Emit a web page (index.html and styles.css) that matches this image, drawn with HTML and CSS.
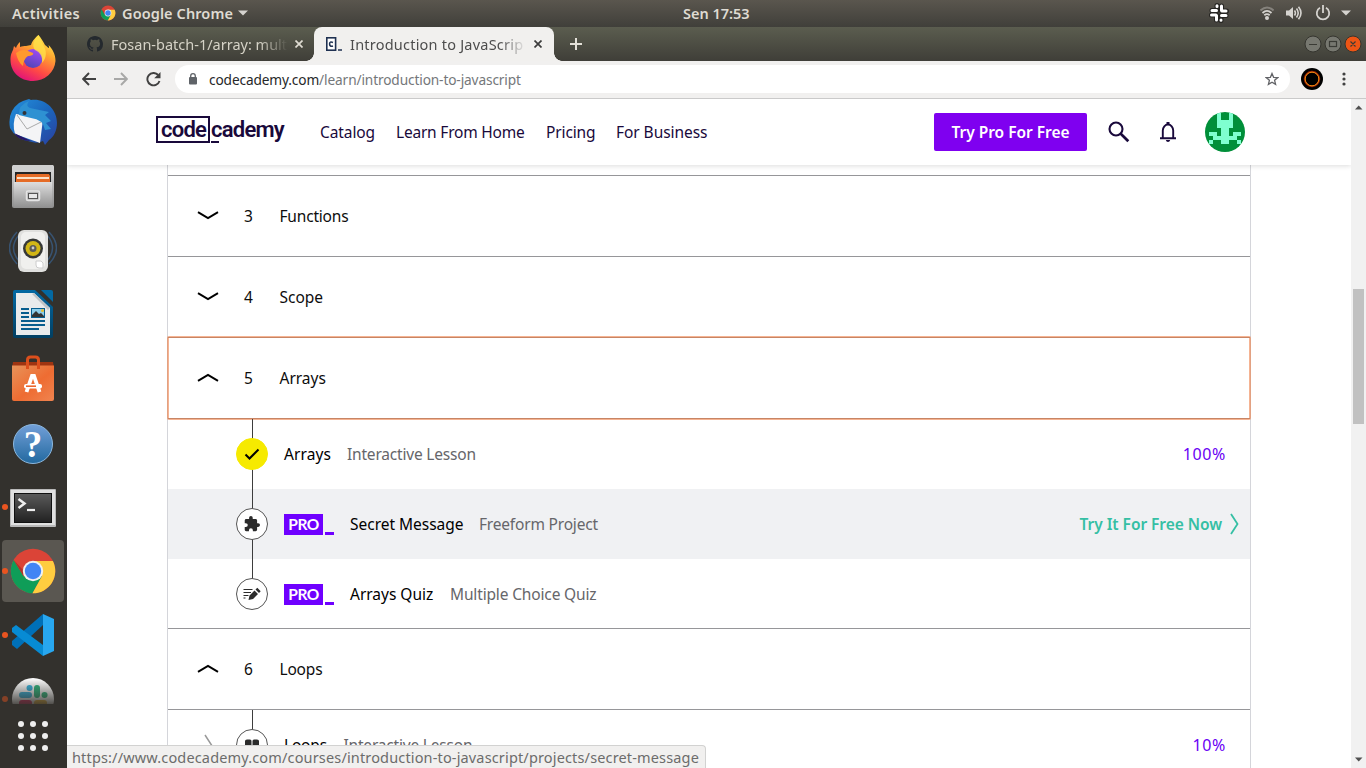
FILE: index.html
```html
<!DOCTYPE html>
<html lang="en">
<head>
<meta charset="utf-8">
<title>Introduction to JavaScript</title>
<link rel="stylesheet" href="styles.css">
</head>
<body>
<svg class="defs" width="0" height="0">
  <defs>
    <linearGradient id="ffBody" x1=".8" y1="0" x2=".3" y2="1"><stop offset="0" stop-color="#fff44f"/><stop offset=".35" stop-color="#ffa630"/><stop offset=".7" stop-color="#ff4a45"/><stop offset="1" stop-color="#e0117b"/></linearGradient>
    <linearGradient id="ffCore" x1=".7" y1="0" x2=".3" y2="1"><stop offset="0" stop-color="#a149f5"/><stop offset="1" stop-color="#5146b5"/></linearGradient>
    <linearGradient id="tb" x1="0" y1="0" x2="1" y2="1"><stop offset="0" stop-color="#2591dd"/><stop offset=".5" stop-color="#1b67bd"/><stop offset="1" stop-color="#2a3f9e"/></linearGradient>
    <linearGradient id="steel" x1="0" y1="0" x2="0" y2="1"><stop offset="0" stop-color="#dedede"/><stop offset="1" stop-color="#8f8f8f"/></linearGradient>
    <linearGradient id="bag" x1="0" y1="0" x2="1" y2="1"><stop offset="0" stop-color="#e8935a"/><stop offset=".55" stop-color="#ee6c32"/><stop offset="1" stop-color="#f08450"/></linearGradient>
    <linearGradient id="blueBall" x1="0" y1="0" x2="0" y2="1"><stop offset="0" stop-color="#729fd8"/><stop offset="1" stop-color="#22699f"/></linearGradient>
    <linearGradient id="screen" x1="0" y1="0" x2="0" y2="1"><stop offset="0" stop-color="#5a5a5a"/><stop offset="1" stop-color="#222"/></linearGradient>
    <linearGradient id="writer" x1="0" y1="0" x2="0" y2="1"><stop offset="0" stop-color="#0369a3"/><stop offset="1" stop-color="#023f62"/></linearGradient>
    <linearGradient id="fade" x1="0" y1="0" x2="0" y2="1"><stop offset="0" stop-color="#33312d" stop-opacity="0"/><stop offset="1" stop-color="#33312d" stop-opacity=".85"/></linearGradient>
    <symbol id="chrome" viewBox="0 0 48 48">
      <circle cx="24" cy="24" r="22.3" fill="#db4437"/>
      <path d="M4.7 13A22.3 22.3 0 0 0 23.5 46.300L33 29.200 24 24 14.700 29.500Z" fill="#0f9d58"/>
      <path d="M24 14H43.900A22.300 22.300 0 0 1 23.500 46.300L33 29Z" fill="#ffcd40"/>
      <path d="M4.700 13 14.500 29 14 23Z" fill="#b0332a"/>
      <circle cx="24" cy="24" r="10.200" fill="#f1f1f1"/><circle cx="24" cy="24" r="8.200" fill="#4285f4"/>
    </symbol>
    <symbol id="chev" viewBox="0 0 22 9"><path d="M1 1.200 11 7 21 1.200" fill="none" stroke="#000" stroke-width="2"/></symbol>
  </defs>
</svg>

<header class="topbar">
  <span class="activities">Activities</span>
  <svg class="tb-chrome" width="16" height="16"><use href="#chrome"/></svg>
  <span class="appname">Google Chrome</span>
  <svg width="10" height="6" viewBox="0 0 10 6"><path d="M0 .5h10L5 5.500z" fill="#d5d3cf"/></svg>
  <span class="clock">Sen 17:53</span>
  <div class="tray">
    <svg class="tray-slack" width="20" height="20" viewBox="0 0 20 20"><g stroke="#262522" stroke-width="5" stroke-linecap="round"><path d="M8 2.500V7.500M12.500 3V7.500M7.500 12.500V17M12 12.500V17.500M2.500 12H7.500M3 7.500H7.500M12.500 12.500H17M12.500 8H17.500"/></g><g stroke="#fff" stroke-width="3" stroke-linecap="round"><path d="M12.500 3V7.500M7.500 12.500V17M3 7.500H7.500M12.500 12.500H17M2.500 12H7M8 2.700V3.500M13 8H17M12 17V17.300"/></g></svg>
    <svg class="tray-wifi" width="14" height="14" viewBox="0 0 14 14" fill="none"><path d="M.5 4.500Q7-1.500 13.500 4.500" stroke="#85827c" stroke-width="2"/><path d="M2.500 7Q7 2.800 11.500 7M4.300 9.300Q7 7 9.700 9.300" stroke="#d5d3cf" stroke-width="1.800"/><circle cx="7" cy="12" r="2" fill="#d5d3cf"/></svg>
    <svg class="tray-vol" width="16" height="14" viewBox="0 0 16 14" fill="none" stroke="#d5d3cf" stroke-width="1.600"><path d="M0 4.500h3L7 1v12L3 9.500H0z" fill="#d5d3cf" stroke="none"/><path d="M8.500 4.500q1.800 2.500 0 5M10.500 2.500q3.400 4.500 0 9M12.500.7q5 6.300 0 12.600"/></svg>
    <svg class="tray-power" width="16" height="16" viewBox="0 0 16 16" fill="none" stroke="#d5d3cf" stroke-width="1.800"><path d="M5 2.800A6.200 6.200 0 1 0 11 2.800M8 0V8"/></svg>
    <svg width="10" height="6" viewBox="0 0 10 6"><path d="M0 .5h10L5 5.500z" fill="#d5d3cf"/></svg>
  </div>
</header>

<div class="desktop">
  <nav class="dock">
    <div class="app"><svg width="48" height="48" viewBox="0 0 48 48"><path d="M29.500 1C32 4 34 7 36 11c2 1 3 3 4 3 0-1 0-2-.5-3 4 4 7 9 7 16A22.500 21.500 0 0 1 24 47C11 47 1.500 38 1.500 26c0-5 1-7 2.500-10L5 12l2 2c1-3 2-4 4-6v5c2-1 4-1 6-1l5-1C23 7 27 3 29.500 1Z" fill="url(#ffBody)"/><circle cx="24" cy="24.500" r="9.500" fill="url(#ffCore)"/><path d="M7 19q6-5 12-2l5 2c1 2-2 3-5 3-3 2-5 6-5 10-4-3-6-8-7-13Z" fill="#ff9a2e"/><path d="M29.500 1C24 7 23 12 26 16c5 2 8 7 7 13 5-5 5-13 1-18Z" fill="#ffe04a" opacity=".8"/></svg></div>
    <div class="app"><svg width="48" height="48" viewBox="0 0 48 48"><path d="M14 3 20 1l2 1C36 0 48 11 48 25c0 7-3 14-8 17l-4 5-2-4Q28 46 23 44 7 42 1 30-2 14 10 5Z" fill="url(#tb)"/><path d="M7 16 34 21 31 45 6 36Q3 26 7 16Z" fill="#f4f4f6"/><path d="M8 17 18 31 34 23" fill="none" stroke="#aaa" stroke-width="1"/><path d="M10 17Q9 7 20 3 16 8 21 10L40 14 36 17 42 23 37 25 42 31 36 32Q34 21 22 20Z" fill="#2e91d2"/><circle cx="15.500" cy="15" r="2" fill="#343438"/><path d="M5 35 22 43Q10 43 5 35Z" fill="#281463"/></svg></div>
    <div class="app"><svg width="48" height="48" viewBox="0 0 48 48"><rect x="3" y="3" width="42" height="43" rx="2" fill="url(#steel)"/><path d="M4 3h40l1 5H3z" fill="#cfcfcf"/><path d="M6 10h36v11H6z" fill="#252525"/><path d="M7 14l1-2h32l1 2v7H7z" fill="#e56c27"/><path d="M8 15h32v2H8z" fill="#fbe1c8"/><path d="M5 20h38v26H5z" fill="url(#steel)"/><rect x="17.500" y="29" width="13" height="9.500" rx="1.500" fill="#bbb" stroke="#e4e4e4" stroke-width="1.500"/><rect x="19.500" y="31.500" width="9" height="5" fill="#e7e7e7" stroke="#555"/></svg></div>
    <div class="app"><svg width="48" height="48" viewBox="0 0 48 48"><g fill="none" stroke="#385371" stroke-width="1.500"><path d="M8 6Q-7 22 8 38M10 9Q-1 22 10 35M40 6Q55 22 40 38M38 9Q49 22 38 35"/></g><rect x="9" y="4" width="30" height="42" rx="6" fill="#e0e0de"/><rect x="12" y="6" width="24" height="37" rx="5" fill="#f0f0ee"/><circle cx="24" cy="22.500" r="10" fill="#363837"/><circle cx="24" cy="22.500" r="7.500" fill="#d1b616"/><circle cx="24" cy="22.500" r="3.500" fill="#5b5b55"/><circle cx="24" cy="22" r="1.400" fill="#ccc"/><path d="M27 35h5l2 2v5h-4q-3 0-3-3z" fill="#fff" stroke="#ccc"/></svg></div>
    <div class="app"><svg width="48" height="48" viewBox="0 0 48 48"><path d="M6 0h20l18 17v29a2 2 0 0 1-2 2H6a2 2 0 0 1-2-2V2a2 2 0 0 1 2-2z" fill="url(#writer)"/><path d="M32 0h10a2 2 0 0 1 2 2v10z" fill="#0369a3"/><path d="M7 3h18l16 15v27H7z" fill="#e9ebec"/><path d="M25 3l16 15-2 2L23 4z" fill="#bfc3c6"/><path d="M12 18h8v2h-8zm0 4h8v2h-8zm0 4h8v2h-8zm0 4h24v2H12zm0 4h24v2H12zm0 4h18v2H12z" fill="#075d8e"/><path d="M22 18h14v10H22z" fill="#075d8e"/><path d="M23 19h12v8H23z" fill="#8dcde9"/><path d="M23 27v-2l4-4 3 3 2-1 3 3v1z" fill="#333"/><circle cx="33.500" cy="20.500" r="1.500" fill="#e5be33"/></svg></div>
    <div class="app"><svg width="48" height="48" viewBox="0 0 48 48"><path d="M4 7h40l1 6H3z" fill="#9f3411"/><path d="M3 10.500h42V44a2 2 0 0 1-2 2H5a2 2 0 0 1-2-2z" fill="url(#bag)"/><path d="M18.500 14V5q0-3 3-3h5q3 0 3 3v9" fill="none" stroke="#dc4f1c" stroke-width="3"/><path d="M17.500 37 23 21h2L30.500 37" fill="none" stroke="#fff" stroke-width="3.800"/><rect x="15" y="29" width="18" height="4.500" rx="2" fill="#fff"/><path d="M17 31.200h10" stroke="#ed672d" stroke-width="1.600"/></svg></div>
    <div class="app"><svg width="48" height="48" viewBox="0 0 48 48"><circle cx="24" cy="25" r="19.500" fill="url(#blueBall)" stroke="#8db8de"/><text x="24" y="38" class="q">?</text></svg></div>
    <div class="app run"><svg width="48" height="48" viewBox="0 0 48 48"><rect x="1" y="6" width="46" height="38" rx="1" fill="#b9b9b9"/><rect x="2" y="7" width="44" height="35" fill="#e0e0e0"/><rect x="5" y="10" width="38" height="30" fill="#111"/><rect x="6" y="11" width="36" height="28" fill="url(#screen)"/><path d="M9.500 16l6 4.500-6 4.500" fill="none" stroke="#eee" stroke-width="2.500"/><path d="M18 27h8" stroke="#eee" stroke-width="2.200"/></svg></div>
    <div class="app run active"><svg width="48" height="48"><use href="#chrome"/></svg></div>
    <div class="app run"><svg width="48" height="48" viewBox="0 0 48 48"><path d="M3 30 34 3v11L8 38 3 34Z" fill="#0070b8"/><path d="M3 17 7 14 34 34V45L3 21Z" fill="#078bd4"/><path d="M34 3 45 8V40L34 45Z" fill="#28a7f0"/></svg></div>
    <div class="app cut run dim"><svg width="48" height="30" viewBox="0 0 48 30"><circle cx="24" cy="25" r="21" fill="#fff"/><g stroke-width="6" stroke-linecap="round" fill="none"><path d="M13 21h7M20.500 14h.1" stroke="#36b5e0"/><path d="M28 14V21M35.500 21h.1" stroke="#2eb67d"/><path d="M13 29h7" stroke="#e01e5a"/><path d="M28 29h7" stroke="#ecb22e"/></g><path d="M0 4h48v26H0z" fill="url(#fade)"/></svg></div>
    <div class="grid9"><i></i><i></i><i></i><i></i><i></i><i></i><i></i><i></i><i></i></div>
  </nav>

  <main class="browser">
    <div class="tabs">
      <div class="tab idle">
        <svg width="16" height="16" viewBox="0 0 16 16"><path fill="#24292e" d="M8 0C3.580 0 0 3.580 0 8c0 3.540 2.290 6.530 5.470 7.590.4.070.55-.17.55-.38 0-.19-.01-.82-.01-1.490-2.010.37-2.530-.49-2.690-.94-.09-.23-.48-.94-.82-1.130-.28-.15-.68-.52-.01-.53.63-.01 1.080.58 1.230.82.72 1.210 1.870.87 2.330.66.07-.52.28-.87.51-1.070-1.780-.2-3.640-.89-3.640-3.950 0-.87.31-1.590.82-2.150-.08-.2-.36-1.020.08-2.120 0 0 .67-.21 2.200.82a7.600 7.600 0 0 1 4 0c1.530-1.040 2.200-.82 2.200-.82.44 1.100.16 1.920.08 2.120.51.56.82 1.270.82 2.150 0 3.070-1.870 3.750-3.650 3.950.29.25.54.73.54 1.480 0 1.070-.01 1.930-.01 2.200 0 .21.15.46.55.38A8.010 8.010 0 0 0 16 8c0-4.420-3.580-8-8-8z"/></svg>
        <span class="tab-title">Fosan-batch-1/array: mult</span>
        <svg class="x" width="8" height="8" viewBox="0 0 8 8"><path d="M.5.5l7 7M7.500.5l-7 7" stroke="#dfdbd2" stroke-width="1.700"/></svg>
      </div>
      <div class="tab current">
        <svg width="16" height="16" viewBox="0 0 16 16"><rect x=".8" y="1.800" width="8.800" height="12.400" fill="#fff" stroke="#1f3151" stroke-width="1.600"/><path d="M7 6.500Q3.500 5 3.600 8T7 10M12 14h4" fill="none" stroke="#1f3151" stroke-width="1.600"/></svg>
        <span class="tab-title">Introduction to JavaScrip</span>
        <svg class="x" width="8" height="8" viewBox="0 0 8 8"><path d="M.5.5l7 7M7.500.5l-7 7" stroke="#3c3c3c" stroke-width="1.700"/></svg>
      </div>
      <svg class="plus" width="12" height="12" viewBox="0 0 12 12"><path d="M6 0v12M0 6h12" stroke="#e3e0d8" stroke-width="2"/></svg>
      <div class="winbtns">
        <svg width="56" height="18" viewBox="0 0 56 18"><g stroke="#35352f"><circle cx="8" cy="9" r="8" fill="#777870"/><circle cx="28" cy="9" r="8" fill="#777870"/><circle cx="48" cy="9" r="8" fill="#ed5515"/></g><g stroke="#3a3b35" fill="none" stroke-width="1.200"><path d="M4 9.500h8M45.500 6.500l5 5M50.500 6.500l-5 5"/><rect x="24.500" y="6.500" width="7" height="5"/></g></svg>
      </div>
    </div>

    <div class="toolbar">
      <svg class="back" width="14" height="14" viewBox="0 0 14 14"><path d="M14 7H1.500M7 1 1.200 7 7 13" fill="none" stroke="#414141" stroke-width="1.900"/></svg>
      <svg class="fwd" width="14" height="14" viewBox="0 0 14 14"><path d="M0 7h12.500M7 1l5.800 6L7 13" fill="none" stroke="#a8a8a7" stroke-width="1.900"/></svg>
      <svg class="reload" width="15" height="15" viewBox="0 0 15 15"><path d="M12.200 3A6.200 6.200 0 1 0 13.500 9" fill="none" stroke="#414141" stroke-width="1.900"/><path d="M14.500 0v6.300H8.200z" fill="#414141"/></svg>
      <div class="omnibox">
        <svg width="8" height="12" viewBox="0 0 8 12"><rect y="4" width="8" height="7.500" rx="1" fill="#5f6368"/><path d="M1.700 5V3a2.300 2.300 0 0 1 4.600 0v2" fill="none" stroke="#5f6368" stroke-width="1.300"/></svg>
        <span class="url"><b>codecademy.com</b>/learn/introduction-to-javascript</span>
        <svg class="star" width="14" height="14" viewBox="0 0 14 14"><path d="M7 1.500 8.600 5.300 12.800 5.600 9.600 8.300 10.600 12.400 7 10.200 3.400 12.400 4.400 8.300 1.200 5.600 5.400 5.300Z" fill="none" stroke="#626367" stroke-width="1.300"/></svg>
      </div>
      <svg class="profile" width="22" height="22" viewBox="0 0 22 22"><circle cx="11" cy="11" r="11"/><circle cx="11" cy="11" r="7.300" fill="none" stroke="#8c1a06" stroke-width="2"/><circle cx="11" cy="11" r="6.900" fill="none" stroke="#f39712" stroke-width="1"/></svg>
      <svg width="4" height="14" viewBox="0 0 4 14" fill="#414141"><circle cx="2" cy="2" r="1.600"/><circle cx="2" cy="7" r="1.600"/><circle cx="2" cy="12" r="1.600"/></svg>
    </div>

    <div class="viewport">
      <div class="page">
        <div class="nav">
          <div class="logo"><span class="code">code</span><span class="cademy">cademy</span></div>
          <a class="n1">Catalog</a><a class="n2">Learn From Home</a><a class="n3">Pricing</a><a class="n4">For Business</a>
          <a class="cta">Try Pro For Free</a>
          <svg class="search" width="22" height="22" viewBox="0 0 22 22" fill="none" stroke="#19093b"><circle cx="8" cy="8" r="6.500" stroke-width="2.100"/><path d="M12.500 12.500 20.300 20.300" stroke-width="2.700"/></svg>
          <svg class="bell" width="16" height="20" viewBox="0 0 16 20"><path d="M2.800 16V8.500a5.200 6 0 0 1 10.400 0V16M0 16.300h16" fill="none" stroke="#19093b" stroke-width="1.900"/><path d="M6.500 0h3v3h-3zM5.800 18h4.400q-.5 2-2.200 2t-2.200-2z" fill="#19093b"/></svg>
          <svg class="avatar" width="40" height="40" viewBox="0 0 40 40"><clipPath id="round"><circle cx="20" cy="20" r="20"/></clipPath><g clip-path="url(#round)"><path fill="#008f39" d="M0 0h40v40H0z"/><path shape-rendering="crispEdges" fill="#7fffd0" d="M12 0h4v8h8V0h4v16h-4v8h4v-4h8v4h-4v4h-8v4h-8v-4H8v-4H4v-4h8v4h4v-8h-4zM4 28h4v4H4zM32 28h4v4h-4z"/></g></svg>
        </div>

        <section class="syllabus">
          <div class="unit"><svg width="22" height="9"><use href="#chev"/></svg><span class="num">3</span><span class="tight">Functions</span></div>
          <div class="unit"><svg width="22" height="9"><use href="#chev"/></svg><span class="num">4</span><span>Scope</span></div>
          <div class="unit focus"><svg class="up" width="22" height="9"><use href="#chev"/></svg><span class="num">5</span><span>Arrays</span></div>
          <div class="lessons">
            <div class="lesson">
              <span class="dot done"><svg width="16" height="16" viewBox="0 0 16 16"><path d="M1.500 8.500 5.500 12.500 14.500 3.500" fill="none" stroke="#000" stroke-width="2"/></svg></span>
              <span class="title w-arrays">Arrays</span><span class="kind tight">Interactive Lesson</span><span class="pct">100%</span>
            </div>
            <div class="lesson hover">
              <span class="dot"><svg width="16" height="16" viewBox="1 1 22 22"><path fill="#2b2b2b" d="M20.500 11H19V7c0-1.100-.9-2-2-2h-4V3.500a2.500 2.500 0 0 0-5 0V5H4c-1.100 0-1.990.9-1.990 2v3.800H3.500a2.700 2.700 0 0 1 0 5.400H2V20c0 1.100.9 2 2 2h3.800v-1.500a2.700 2.700 0 0 1 5.400 0V22H17c1.100 0 2-.9 2-2v-4h1.500a2.500 2.500 0 0 0 0-5z"/></svg></span>
              <span class="pro"><b>PRO</b><i></i></span><span class="title w-secret">Secret Message</span><span class="kind tight">Freeform Project</span>
              <span class="try">Try It For Free Now</span><svg class="go" width="9" height="22" viewBox="0 0 9 22"><path d="M1 1 7.500 11 1 21" fill="none" stroke="#35bfa4" stroke-width="1.800"/></svg>
            </div>
            <div class="lesson">
              <span class="dot"><svg width="18" height="14" viewBox="0 0 18 14"><path d="M.5 2.500h9M.5 5.500h7.500M.5 8.500h5M.5 11h2" stroke="#2b2b2b" stroke-width="1.200"/><path d="M5.500 13 6.500 8.500 11.500 3.500 15 7 10 12Z M12.500 2.500 14.300.8 17.700 4.200 16 6Z" fill="#2b2b2b"/></svg></span>
              <span class="pro"><b>PRO</b><i></i></span><span class="title w-quiz">Arrays Quiz</span><span class="kind">Multiple Choice Quiz</span>
            </div>
          </div>
          <div class="unit last"><svg class="up" width="22" height="9"><use href="#chev"/></svg><span class="num">6</span><span class="tight">Loops</span></div>
          <div class="lessons open">
            <div class="lesson">
              <svg class="arrow" width="9" height="22" viewBox="0 0 9 22"><path d="M1 1 7.500 11 1 21" fill="none" stroke="#999" stroke-width="1.500"/></svg>
              <span class="dot"><svg width="16" height="14" viewBox="0 0 16 14"><path d="M1 3Q1 1.500 3 1.500H6Q7.500 1.500 7.500 3V12H1zM8.500 3Q8.500 1.500 10 1.500h3Q15 1.500 15 3v9H8.500z" fill="#2b2b2b"/></svg></span>
              <span class="title w-loops tight">Loops</span><span class="kind tight">Interactive Lesson</span><span class="pct">10%</span>
            </div>
          </div>
        </section>
      </div>
      <div class="scroll">
        <svg width="8" height="5" viewBox="0 0 8 5"><path d="M0 4.500h7.500L3.700.5z" fill="#505050"/></svg>
        <div class="thumb"></div>
        <svg width="8" height="5" viewBox="0 0 8 5"><path d="M0 .5h7.500L3.700 4.500z" fill="#505050"/></svg>
      </div>
      <div class="status">https://www.codecademy.com/courses/introduction-to-javascript/projects/secret-message</div>
    </div>
  </main>
</div>
</body>
</html>
```
FILE: styles.css
```css
* { box-sizing: border-box; }
body { margin: 0; width: 1366px; height: 768px; overflow: hidden; display: flex; flex-direction: column; background: #fff; font-family: "Noto Sans", "Open Sans", sans-serif; }
svg { display: block; flex: none; }
span, a { white-space: nowrap; flex: none; }
.defs { position: absolute; }

/* Desktop bar */
.topbar { height: 27px; flex: none; display: flex; align-items: center; padding: 0 15px 1px 12px; background: linear-gradient(#5a564e, #403f3a); color: #dfdbd2; font-size: 14.500px; font-weight: 600; }
.activities { width: 88px; letter-spacing: .33px; }
.tb-chrome { margin-right: 6px; }
.appname { width: 116px; letter-spacing: .1px; }
.clock { margin-left: 435px; }
.tray { margin-left: auto; display: flex; align-items: center; }
.tray-slack { margin-right: 31px; }
.tray-wifi { margin-right: 12px; }
.tray-vol { margin-right: 13px; }
.tray-power { margin-right: 10px; }

.desktop { flex: 1; min-height: 0; display: flex; }

/* Dock */
.dock { width: 67px; flex: none; background: #33312d; display: flex; flex-direction: column; }
.app { position: relative; height: 64.100px; flex: none; display: flex; align-items: center; justify-content: center; padding: 0 1px 2px 0; }
.app.active::after { content: ""; position: absolute; left: 2px; top: 0; width: 62px; height: 62px; border-radius: 4px; background: #5a5751; }
.app.active svg { position: relative; z-index: 1; }
.run::before { content: ""; position: absolute; z-index: 2; left: 2px; top: 28px; width: 6px; height: 6px; border-radius: 50%; background: #e95420; }
.dim::before { opacity: .45; }
.cut { height: 36px; align-items: flex-end; padding-bottom: 0; }
.q { font: 700 37px "Liberation Serif", serif; fill: #fff; text-anchor: middle; }
.grid9 { display: grid; grid-template-columns: repeat(3, 6px); gap: 6px; margin: 17px 0 0 18px; }
.grid9 i { height: 6px; border-radius: 50%; background: #eee; }

/* Browser frame */
.browser { flex: 1; min-width: 0; display: flex; flex-direction: column; }
.tabs { height: 34px; flex: none; display: flex; align-items: center; background: linear-gradient(#5b5d4f, #3f3e38); }
.tab { height: 34px; display: flex; align-items: center; flex: none; font-size: 14.500px; }
.tab-title { margin-left: 8px; }
.idle { width: 247px; padding-left: 20px; color: #d5d2c6; }
.idle .tab-title { width: 177px; -webkit-mask-image: linear-gradient(90deg, #000 148px, transparent 177px); mask-image: linear-gradient(90deg, #000 148px, transparent 177px); }
.idle .x { margin-left: 7px; }
.current { position: relative; width: 240px; padding-left: 12px; border-radius: 8px 8px 0 0; background: #f1f0ee; color: #4d4d4d; }
.current::before, .current::after { content: ""; position: absolute; bottom: 0; width: 8px; height: 8px; }
.current::before { left: -8px; background: radial-gradient(circle at 0 0, transparent 7.500px, #f1f0ee 8px); }
.current::after { right: -8px; background: radial-gradient(circle at 100% 0, transparent 7.500px, #f1f0ee 8px); }
.current .tab-title { width: 176px; letter-spacing: .22px; -webkit-mask-image: linear-gradient(90deg, #000 150px, transparent 176px); mask-image: linear-gradient(90deg, #000 150px, transparent 176px); }
.current .x { margin-left: 8px; }
.plus { margin-left: 16px; }
.winbtns { margin: 0 5px 0 auto; }
.winbtns svg { overflow: visible; }

.toolbar { height: 38px; flex: none; display: flex; align-items: center; padding: 0 20px 1px 15px; background: #f1f0ef; border-bottom: 1px solid #cacaca; }
.fwd { margin-left: 18px; }
.reload { margin-left: 18px; }
.omnibox { width: 1115px; height: 28px; margin-left: 14px; margin-right: 11px; flex: none; border-radius: 14px; background: #fff; display: flex; align-items: center; padding: 0 11px 0 14px; }
.url { margin-left: 12px; font-size: 13.700px; letter-spacing: -.13px; color: #74777a; }
.url b { font-weight: 400; color: #27282a; }
.star { margin-left: auto; }
.profile { margin-right: 19px; }

.viewport { position: relative; flex: 1; min-height: 0; display: flex; }
.page { flex: 1; min-width: 0; overflow: hidden; font-size: 15.500px; letter-spacing: -.02px; color: #0d0d0d; }

/* Site header */
.nav { position: relative; z-index: 1; height: 66px; display: flex; align-items: center; padding-left: 89px; background: #fff; box-shadow: 0 1px 5px rgba(0, 0, 0, .14); color: #19093b; }
.logo { display: flex; width: 164px; height: 27px; flex: none; margin-top: -5px; font: 600 22px/23px Roboto, sans-serif; letter-spacing: -.760px; }
.code { width: 54px; height: 27px; border: 2px solid #19093b; padding-left: 3px; }
.cademy { position: relative; padding: 2px 0 0 1px; }
.cademy::after { content: ""; position: absolute; left: 1px; top: 25px; width: 8px; height: 2px; background: #19093b; }
.n1 { width: 76px; letter-spacing: -.1px; }
.n2 { width: 150px; letter-spacing: -.210px; }
.n3 { width: 70px; letter-spacing: -.12px; }
.n4 { width: 318px; letter-spacing: -.06px; }
.cta { width: 153px; height: 38px; line-height: 38px; border-radius: 2px; background: #7f00f0; color: #fff; font-weight: 600; text-align: center; }
.search { margin-left: 21px; }
.bell { margin-left: 30px; }
.avatar { margin-left: 29px; }

/* Syllabus */
.syllabus { width: 1084px; margin: 0 0 0 100px; padding-top: 10px; border: solid #d4d5da; border-width: 0 1px; }
.unit { height: 81px; display: flex; align-items: center; padding: 0 0 1px 29px; border-top: 1px solid #969699; }
.unit .num { width: 35.500px; margin-left: 25px; }
.up { transform: scaleY(-1); }
.tight { letter-spacing: -.19px; }
.last { height: 82px; border-bottom: 1px solid #969699; }
.focus { position: relative; height: 82px; border-bottom: 1px solid #969699; }
.focus::after { content: ""; position: absolute; inset: -2px -1px -2px; border: 2px solid rgba(238, 119, 60, .56); border-radius: 2px; }
.lessons { margin-bottom: -1px; }
.lesson { position: relative; height: 70px; display: flex; align-items: center; padding-left: 68px; }
.lesson::before { content: ""; position: absolute; left: 84px; top: 0; width: 1px; height: 100%; background: #3d3d3d; }
.lessons:not(.open) .lesson:last-child::before { height: 50%; }
.hover { background: #f0f1f3; }
.dot { position: relative; width: 32px; height: 32px; margin-right: 16px; display: flex; align-items: center; justify-content: center; border: 1px solid #555; border-radius: 50%; background: #fff; }
.done { background: #f6ea00; border-color: #f6ea00; }
.title { color: #000; }
.w-arrays { width: 63px; letter-spacing: .09px; }
.w-secret { width: 129px; }
.w-quiz { width: 100px; }
.w-loops { width: 59.500px; }
.kind { color: #66666a; }
.kind:not(.tight) { letter-spacing: -.15px; }
.pct { margin-left: auto; margin-right: 24px; color: #6a00f4; font-size: 16px; letter-spacing: .6px; }
.pro { width: 66px; display: flex; align-items: flex-end; }
.pro b { width: 39px; height: 21px; line-height: 21px; text-align: center; background: #6f00ff; color: #fff; font: 700 15.500px/21px Lato, sans-serif; letter-spacing: -.5px; }
.pro i { width: 9px; height: 3px; margin-left: 2px; background: #6f00ff; }
.try { margin-left: auto; color: #35bfa4; font-weight: 600; letter-spacing: -.05px; }
.go { margin: 0 11px 0 8px; }
.arrow { position: absolute; left: 36px; top: 24px; }

.scroll { width: 15px; flex: none; display: flex; flex-direction: column; align-items: center; padding: 6px 0 6px 1px; background: #f1f1f1; }
.thumb { width: 11px; height: 135px; margin: 179px 1px auto 0; background: #c1c1c1; }

.status { position: absolute; z-index: 2; left: 0; bottom: 0; width: 639px; height: 23px; padding-left: 5px; border: 1px solid #d2d2d1; border-width: 1px 1px 0 0; border-radius: 0 4px 0 0; background: #f1f0ef; color: #6c6c6b; font-size: 14.500px; line-height: 22px; letter-spacing: .153px; white-space: nowrap; }
```
